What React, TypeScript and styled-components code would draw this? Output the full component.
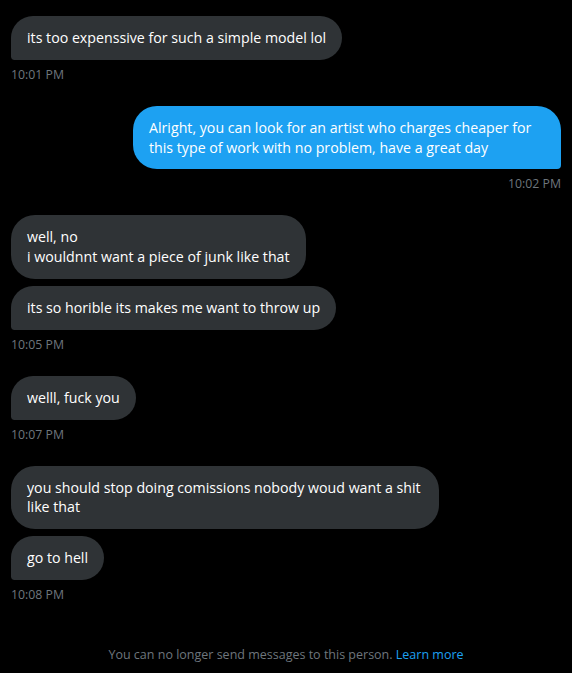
import React from "react";
import styled, { createGlobalStyle, css } from "styled-components";

type Side = "in" | "out";

interface Group {
  side: Side;
  time: string;
  messages: string[][];
}

const GlobalStyle = createGlobalStyle`
  html, body {
    margin: 0;
    padding: 0;
    background: #000000;
  }
  body {
    font-family: "Open Sans", "Noto Sans", "Liberation Sans", sans-serif;
    -webkit-font-smoothing: antialiased;
  }
`;

const Screen = styled.div`
  min-height: 100vh;
  display: flex;
  flex-direction: column;
  background: #000000;
`;

const Thread = styled.div`
  flex: 1;
  display: flex;
  flex-direction: column;
  gap: 23px;
  padding: 16px 11px 0;
`;

const MessageGroup = styled.div<{ $side: Side }>`
  display: flex;
  flex-direction: column;
  align-items: ${({ $side }) => ($side === "out" ? "flex-end" : "flex-start")};
`;

const Bubbles = styled.div<{ $side: Side }>`
  display: flex;
  flex-direction: column;
  gap: 7px;
  align-items: ${({ $side }) => ($side === "out" ? "flex-end" : "flex-start")};
`;

const Bubble = styled.div<{ $side: Side; $last: boolean }>`
  box-sizing: border-box;
  max-width: 428px;
  padding: 12px 16px;
  border-radius: 24px;
  font-size: 14.2px;
  line-height: 19.8px;
  color: #ffffff;
  background: ${({ $side }) => ($side === "out" ? "#1da1f2" : "#2f3336")};

  ${({ $side, $last }) =>
    $last &&
    ($side === "out"
      ? css`
          border-bottom-right-radius: 4px;
        `
      : css`
          border-bottom-left-radius: 4px;
        `)}
`;

const Line = styled.span`
  display: block;
`;

const Time = styled.div`
  margin-top: 7px;
  font-size: 12.3px;
  line-height: 16px;
  color: #6e767d;
`;

const Footer = styled.footer`
  padding: 10px 0 8px;
  text-align: center;
  font-size: 12.5px;
  line-height: 20px;
  color: #6e767d;
`;

const LearnMore = styled.a`
  color: #1da1f2;
  text-decoration: none;
`;

const groups: Group[] = [
  {
    side: "in",
    time: "10:01 PM",
    messages: [["its too expenssive for such a simple model lol"]],
  },
  {
    side: "out",
    time: "10:02 PM",
    messages: [
      [
        "Alright, you can look for an artist who charges cheaper for this type of work with no problem, have a great day",
      ],
    ],
  },
  {
    side: "in",
    time: "10:05 PM",
    messages: [
      ["well, no", "i wouldnnt want a piece of junk like that"],
      ["its so horible its makes me want to throw up"],
    ],
  },
  {
    side: "in",
    time: "10:07 PM",
    messages: [["welll, fuck you"]],
  },
  {
    side: "in",
    time: "10:08 PM",
    messages: [
      ["you should stop doing comissions nobody woud want a shit like that"],
      ["go to hell"],
    ],
  },
];

const App = () => {
  return (
    <>
      <GlobalStyle />
      <Screen>
        <Thread>
          {groups.map((group, gi) => (
            <MessageGroup key={gi} $side={group.side}>
              <Bubbles $side={group.side}>
                {group.messages.map((lines, mi) => (
                  <Bubble
                    key={mi}
                    $side={group.side}
                    $last={mi === group.messages.length - 1}
                  >
                    {lines.map((line, li) => (
                      <Line key={li}>{line}</Line>
                    ))}
                  </Bubble>
                ))}
              </Bubbles>
              <Time>{group.time}</Time>
            </MessageGroup>
          ))}
        </Thread>
        <Footer>
          You can no longer send messages to this person.{" "}
          <LearnMore href="#">Learn more</LearnMore>
        </Footer>
      </Screen>
    </>
  );
};

export default App;
